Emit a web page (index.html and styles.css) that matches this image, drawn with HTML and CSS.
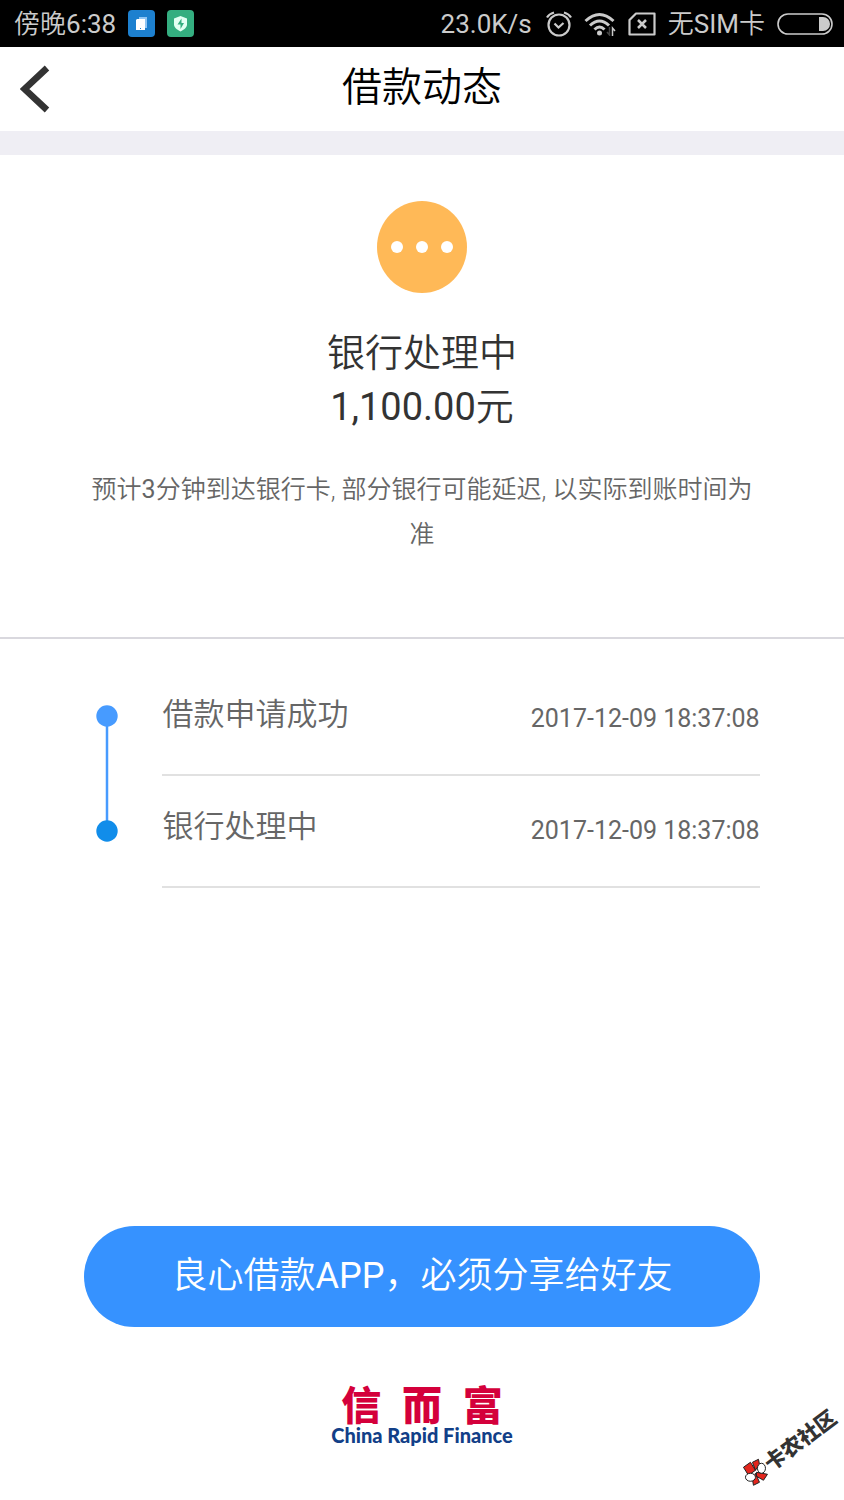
FILE: index.html
```html
<!DOCTYPE html>
<html lang="zh-CN">
<head>
<meta charset="utf-8">
<meta name="viewport" content="width=device-width, initial-scale=1">
<title>借款动态</title>
<link rel="stylesheet" href="styles.css">
</head>
<body>
<div class="status-bar">
  <div class="status-group">
    <span>傍晚<span class="latin">6:38</span></span>
    <svg class="badge" viewBox="0 0 27 27" aria-hidden="true">
      <rect width="27" height="27" rx="4" fill="#1d80cf"/>
      <path d="M11 7h8v11h-8z" fill="#8fc5f3"/>
      <path d="M9 9h8v11H8V10z" fill="#fff"/>
      <path d="M12 18h1v1h-1z" fill="#1d80cf"/>
    </svg>
    <svg class="badge" viewBox="0 0 27 27" aria-hidden="true">
      <rect width="27" height="27" rx="4" fill="#34ae80"/>
      <path d="M13.500 6l6.500 2.500v6c0 3-3 5-6.500 7-3.500-2-6.500-4-6.500-7v-6z" fill="#e3fff3"/>
      <path d="M14.500 8.500l-4 6h3v4.500l3.500-6h-2.500z" fill="#34ae80"/>
    </svg>
  </div>
  <div class="status-group">
    <span class="latin speed">23.0K/s</span>
    <svg class="icon-alarm" viewBox="0 0 26 26" aria-hidden="true" fill="none" stroke="#cbcbcb" stroke-width="2.200">
      <circle cx="13" cy="14" r="10.500"/>
      <path d="M8.500 12.500l4 4 5-4.500M1 6.500Q3 3 8 1.500M25 6.500Q23 3 18 1.500"/>
    </svg>
    <svg class="icon-wifi" viewBox="0 0 32 24" aria-hidden="true" fill="none" stroke="#cbcbcb" stroke-width="3">
      <path d="M1.500 9Q15.500-4 29.500 9M6 13.500Q15.500 4.500 25 13.500M10.500 17.500Q15.500 12.500 20.500 17.500"/>
      <circle cx="15.500" cy="21" r="2.500" fill="#cbcbcb" stroke="none"/>
      <path d="M25.500 15v8l-2.500-3" stroke="#444" stroke-width="1.500"/>
      <path d="M28.500 24v-8l2.500 3" stroke-width="1.500"/>
    </svg>
    <svg class="icon-sim" viewBox="0 0 28 24" aria-hidden="true" fill="none" stroke="#cbcbcb" stroke-width="2.200">
      <path d="M8 1.500h18.500v21H1.500V8z" stroke-linejoin="round"/>
      <path d="M10 8l8 8M18 8l-8 8" stroke-width="2.500"/>
    </svg>
    <span>无<span class="latin">SIM</span>卡</span>
    <svg class="icon-battery" viewBox="0 0 56 22" aria-hidden="true">
      <rect x="1" y="1" width="54" height="20" rx="10" fill="none" stroke="#cbcbcb" stroke-width="1.600"/>
      <path d="M42 4h4a7 7 0 0 1 0 14h-4z" fill="#cbcbcb"/>
    </svg>
  </div>
</div>

<header class="nav">
  <button class="back" type="button" aria-label="返回">
    <svg viewBox="0 0 30 48" aria-hidden="true"><path d="M27 3L4.500 24 27 45" fill="none" stroke="#333" stroke-width="6.500"/></svg>
  </button>
  <h1 class="nav-title">借款动态</h1>
</header>

<main class="page">
  <section class="summary">
    <svg class="pending" viewBox="0 0 90 92" aria-hidden="true">
      <ellipse cx="45" cy="46" rx="45" ry="46" fill="#ffb957"/>
      <g fill="#fff"><circle cx="20" cy="46" r="6"/><circle cx="45" cy="46" r="6"/><circle cx="70" cy="46" r="6"/></g>
    </svg>
    <h2 class="summary-title">银行处理中</h2>
    <p class="amount"><span class="latin">1,100.00</span>元</p>
    <p class="hint">预计<span class="latin">3</span>分钟到达银行卡, 部分银行可能延迟, 以实际到账时间为准</p>
  </section>

  <section class="timeline">
    <svg class="track" viewBox="0 0 22 137" aria-hidden="true">
      <path d="M11 11v115" stroke="#479bff" stroke-width="2.500"/>
      <circle cx="11" cy="11" r="10.700" fill="#479bff"/>
      <circle cx="11" cy="126" r="10.700" fill="#118dea"/>
    </svg>
    <ol class="steps">
      <li class="step"><span class="step-name">借款申请成功</span><time class="step-time">2017-12-09 18:37:08</time></li>
      <li class="step"><span class="step-name">银行处理中</span><time class="step-time">2017-12-09 18:37:08</time></li>
    </ol>
  </section>

  <footer class="footer">
    <button class="share" type="button">良心借款<span class="latin">APP</span>，必须分享给好友</button>
    <div class="brand">
      <div class="brand-cn"><span>信</span><span>而</span><span>富</span></div>
      <div class="brand-en">China Rapid Finance</div>
    </div>
  </footer>
</main>

<div class="watermark">
  <svg class="watermark-mark" viewBox="0 0 26 26" aria-hidden="true" stroke="#222" stroke-width="1">
    <g transform="rotate(37 13 13)">
      <path d="M1 8l7-5 5 8-7 5zM10 3l6-3 1 5-4 6zM14 13l11 2-4 6-7-4zM13 14l4 9-6 3-1-6z" fill="#e3261d"/>
      <ellipse cx="19" cy="9" rx="4" ry="5" fill="#fff"/>
      <ellipse cx="8" cy="18" rx="5" ry="4" fill="#fff"/>
    </g>
  </svg>
  <span>卡农社区</span>
</div>
</body>
</html>
```
FILE: styles.css
```css
* {
  box-sizing: border-box;
}

body {
  margin: 0;
  min-height: 100vh;
  display: flex;
  flex-direction: column;
  position: relative;
  background: #fff;
  color: #333;
  font-family: Roboto, "Noto Sans CJK SC", sans-serif;
  font-weight: 350;
}

h1, h2, p, ol {
  margin: 0;
  padding: 0;
  font-weight: 350;
}

button {
  border: 0;
  padding: 0;
  font: inherit;
  cursor: pointer;
}

svg {
  display: block;
  flex: none;
}

.latin {
  font-weight: 400;
}

.status-bar {
  display: flex;
  justify-content: space-between;
  align-items: center;
  height: 47px;
  padding: 0 11px 0 14px;
  background: #000;
  color: #cbcbcb;
  font-size: 26px;
  line-height: 30px;
  white-space: nowrap;
}

.status-group {
  display: flex;
  align-items: center;
  gap: 12px;
}

.speed {
  padding-right: 2px;
}

.badge {
  width: 27px;
  height: 27px;
}

.icon-alarm {
  width: 26px;
  height: 26px;
}

.icon-wifi {
  width: 32px;
  height: 24px;
}

.icon-sim {
  width: 28px;
  height: 24px;
}

.icon-battery {
  width: 56px;
  height: 22px;
}

.nav {
  display: grid;
  grid-template-columns: 60px 1fr 60px;
  align-items: center;
  height: 108px;
  border-bottom: 24px solid #efeef4;
}

.back {
  justify-self: start;
  padding-left: 20px;
  background: none;
}

.back svg {
  width: 30px;
  height: 48px;
}

.nav-title {
  color: #000;
  font-size: 40px;
  line-height: 60px;
  padding-bottom: 2px;
  text-align: center;
}

.page {
  flex: 1;
  display: flex;
  flex-direction: column;
}

.summary {
  display: flex;
  flex-direction: column;
  align-items: center;
  padding: 46px 10% 80px;
  border-bottom: 2px solid #d9d8de;
  text-align: center;
}

.pending {
  width: 90px;
  height: 92px;
  margin-bottom: 33px;
}

.summary-title,
.amount {
  font-size: 38px;
  line-height: 54px;
}

.hint {
  margin-top: 33px;
  color: #666;
  font-size: 25px;
  line-height: 45px;
}

.timeline {
  display: flex;
  align-items: flex-start;
  gap: 44px;
  padding: 25px 10% 0;
}

.track {
  width: 22px;
  height: 137px;
  margin: 41px 0 0 12px;
}

.steps {
  flex: 1;
  list-style: none;
}

.step {
  display: flex;
  justify-content: space-between;
  align-items: flex-end;
  height: 112px;
  padding-bottom: 36px;
  border-bottom: 2px solid #e1e1e1;
  color: #666;
}

.step-name {
  font-size: 31px;
  line-height: 46px;
}

.step-time {
  font-size: 25px;
  font-weight: 400;
  line-height: 38px;
}

.footer {
  margin-top: auto;
  padding: 40px 10% 54px;
}

.share {
  display: block;
  width: 100%;
  height: 101px;
  padding-bottom: 2px;
  border-radius: 51px;
  background: #3692ff;
  color: #fff;
  font-size: 36px;
  line-height: 48px;
}

.brand {
  width: 182px;
  margin: 57px auto 0;
}

.brand-cn {
  display: flex;
  justify-content: space-around;
  color: #d4003b;
  font-family: "Noto Sans CJK SC", sans-serif;
  font-size: 40px;
  font-weight: 900;
  line-height: 38px;
}

.brand-en {
  margin-top: 2px;
  color: #123f88;
  font-family: Lato, sans-serif;
  font-size: 20px;
  font-weight: 900;
  line-height: 22px;
  text-align: center;
  white-space: nowrap;
}

.watermark {
  position: absolute;
  right: 0;
  bottom: 40px;
  display: flex;
  align-items: center;
  transform: rotate(-37deg);
  color: #333;
  font-family: "Noto Sans CJK SC", sans-serif;
  font-size: 21px;
  font-weight: 900;
  line-height: 24px;
}

.watermark-mark {
  width: 26px;
  height: 26px;
}
```
